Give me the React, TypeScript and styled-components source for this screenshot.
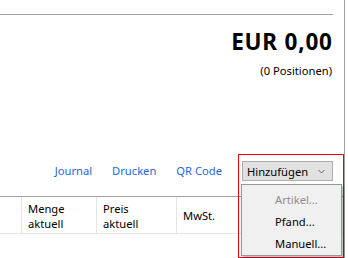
import React from "react";
import styled, { createGlobalStyle } from "styled-components";

const Global = createGlobalStyle`
  html, body { margin: 0; padding: 0; background: #ffffff; }
  body { font-family: "Noto Sans", "Open Sans", sans-serif; font-size: 11.2px; color: #000; overflow: hidden; }
`;

const Screen = styled.div`
  position: relative;
  width: 348px;
  height: 258px;
  overflow: hidden;
  display: flex;
  background: #fff;
`;

const Panel = styled.div`
  width: 344px;
  height: 258px;
  border-right: 1px solid #a0a0a0;
  display: flex;
  flex-direction: column;
`;

const TopRule = styled.div`
  margin-top: 14px;
  margin-right: 11px;
  height: 1px;
  background: #a0a0a0;
`;

const Summary = styled.div`
  display: flex;
  flex-direction: column;
  align-items: flex-end;
  padding-right: 12px;
  margin-top: 13px;
`;

const Amount = styled.div`
  font-size: 22.5px;
  font-weight: 700;
  letter-spacing: 0.8px;
  margin-right: -0.8px;
  line-height: 28px;
`;

const Count = styled.div`
  font-size: 11.2px;
  line-height: 16px;
  margin-top: 7px;
`;

const Toolbar = styled.div`
  display: flex;
  justify-content: flex-end;
  align-items: center;
  gap: 20px;
  padding-right: 11px;
  margin-top: 82px;
  height: 20px;
`;

const Link = styled.span`
  color: #1f68d6;
  font-size: 11.2px;
  line-height: 16px;
`;

const DropButton = styled.div`
  box-sizing: border-box;
  width: 91px;
  height: 20px;
  background: #e1e1e1;
  border: 1px solid #adadad;
  display: flex;
  align-items: center;
  padding-left: 4px;
  font-size: 11.2px;
  gap: 10px;
`;

const Table = styled.div`
  margin-top: 15px;
  display: grid;
  grid-template-columns: 22px 75px 80px 1fr;
  height: 36px;
  border-top: 1px solid #a0a0a0;
  border-bottom: 1px solid #e5e5e5;
`;

const HeadCell = styled.div`
  border-right: 1px solid #e5e5e5;
  padding-left: 6px;
  display: flex;
  flex-direction: column;
  justify-content: center;
  font-size: 11.2px;
  line-height: 15px;
  padding-top: 1px;
`;

const Highlight = styled.div`
  position: absolute;
  left: 238px;
  top: 154px;
  width: 106px;
  height: 104px;
  box-sizing: border-box;
  border: 1px solid #e3000f;
  pointer-events: none;
`;

const Menu = styled.div`
  position: absolute;
  left: 241px;
  top: 184px;
  width: 101px;
  height: 72px;
  box-sizing: border-box;
  background: #f0f0f0;
  border: 1px solid #979797;
  box-shadow: 2px 2px 2px rgba(0, 0, 0, 0.25);
  padding-top: 4px;
  display: flex;
  flex-direction: column;
`;

const MenuItem = styled.div<{ $disabled?: boolean }>`
  height: 22px;
  line-height: 22px;
  padding-left: 33px;
  font-size: 11.2px;
  color: ${(p) => (p.$disabled ? "#8d8d8d" : "#000")};
`;

const Chevron = () => (
  <svg width="7" height="5" viewBox="0 0 7 5" style={{ marginTop: 1 }}>
    <path d="M0.5 1 L3.5 4 L6.5 1" fill="none" stroke="#666" strokeWidth="1" />
  </svg>
);

export default function App() {
  return (
    <>
      <Global />
      <Screen>
        <Panel>
          <TopRule />
          <Summary>
            <Amount>EUR 0,00</Amount>
            <Count>(0 Positionen)</Count>
          </Summary>
          <Toolbar>
            <Link>Journal</Link>
            <Link>Drucken</Link>
            <Link>QR Code</Link>
            <DropButton>
              <span>Hinzufügen</span>
              <Chevron />
            </DropButton>
          </Toolbar>
          <Table>
            <HeadCell />
            <HeadCell>
              <span>Menge</span>
              <span>aktuell</span>
            </HeadCell>
            <HeadCell>
              <span>Preis</span>
              <span>aktuell</span>
            </HeadCell>
            <HeadCell>
              <span>MwSt.</span>
            </HeadCell>
          </Table>
        </Panel>
        <Highlight />
        <Menu>
          <MenuItem $disabled>Artikel...</MenuItem>
          <MenuItem>Pfand...</MenuItem>
          <MenuItem>Manuell...</MenuItem>
        </Menu>
      </Screen>
    </>
  );
}
